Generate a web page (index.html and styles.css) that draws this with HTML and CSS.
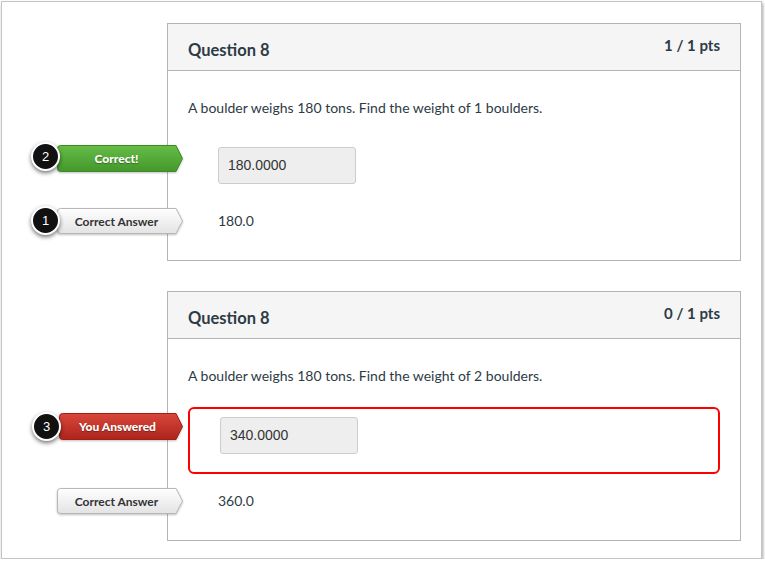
FILE: index.html
```html
<!DOCTYPE html>
<html>
<head>
<meta charset="utf-8">
<link rel="stylesheet" href="styles.css">
</head>
<body>
<div class="frame">
  <section class="card">
    <header class="card-head">
      <h2 class="title">Question 8</h2>
      <span class="pts">1 / 1 pts</span>
    </header>
    <div class="card-body">
      <p class="question">A boulder weighs 180 tons. Find the weight of 1 boulders.</p>
      <div class="answer-row">
        <div class="tag tag-green">
          <svg class="tag-bg" width="126" height="27" viewBox="0 0 126 27">
            <defs>
              <linearGradient id="gGreen" x1="0" y1="0" x2="0" y2="1">
                <stop offset="0" stop-color="#66bd46"/>
                <stop offset="1" stop-color="#44972c"/>
              </linearGradient>
            </defs>
            <path d="M3.5,0.5 H119 L125.5,13.5 L119,26.5 H3.5 Q0.5,26.5 0.5,23.5 V3.5 Q0.5,0.5 3.5,0.5 Z" fill="url(#gGreen)" stroke="#3d8a27" stroke-width="1"/>
          </svg>
          <span class="tag-text light">Correct!</span>
          <span class="step step-2">2</span>
        </div>
        <div class="answer-box plain">
          <div class="input">180.0000</div>
        </div>
      </div>
      <div class="correct-row first">
        <div class="tag tag-gray">
          <svg class="tag-bg" width="126" height="26" viewBox="0 0 126 26">
            <defs>
              <linearGradient id="gGray1" x1="0" y1="0" x2="0" y2="1">
                <stop offset="0" stop-color="#ffffff"/>
                <stop offset="1" stop-color="#e3e3e3"/>
              </linearGradient>
            </defs>
            <path d="M3.5,0.5 H119 L125.5,13 L119,25.5 H3.5 Q0.5,25.5 0.5,22.5 V3.5 Q0.5,0.5 3.5,0.5 Z" fill="url(#gGray1)" stroke="#b8b8b8" stroke-width="1"/>
          </svg>
          <span class="tag-text dark">Correct Answer</span>
          <span class="step step-1">1</span>
        </div>
        <span class="value">180.0</span>
      </div>
    </div>
  </section>

  <section class="card second">
    <header class="card-head">
      <h2 class="title">Question 8</h2>
      <span class="pts">0 / 1 pts</span>
    </header>
    <div class="card-body">
      <p class="question">A boulder weighs 180 tons. Find the weight of 2 boulders.</p>
      <div class="answer-row">
        <div class="tag tag-red">
          <svg class="tag-bg" width="124" height="27" viewBox="0 0 124 27">
            <defs>
              <linearGradient id="gRed" x1="0" y1="0" x2="0" y2="1">
                <stop offset="0" stop-color="#d9473b"/>
                <stop offset="1" stop-color="#ad241c"/>
              </linearGradient>
            </defs>
            <path d="M3.5,0.5 H117 L123.5,13.5 L117,26.5 H3.5 Q0.5,26.5 0.5,23.5 V3.5 Q0.5,0.5 3.5,0.5 Z" fill="url(#gRed)" stroke="#9e2019" stroke-width="1"/>
          </svg>
          <span class="tag-text light">You Answered</span>
          <span class="step step-3">3</span>
        </div>
        <div class="answer-box wrong">
          <div class="input">340.0000</div>
        </div>
      </div>
      <div class="correct-row second-row">
        <div class="tag tag-gray">
          <svg class="tag-bg" width="126" height="26" viewBox="0 0 126 26">
            <defs>
              <linearGradient id="gGray2" x1="0" y1="0" x2="0" y2="1">
                <stop offset="0" stop-color="#ffffff"/>
                <stop offset="1" stop-color="#e3e3e3"/>
              </linearGradient>
            </defs>
            <path d="M3.5,0.5 H119 L125.5,13 L119,25.5 H3.5 Q0.5,25.5 0.5,22.5 V3.5 Q0.5,0.5 3.5,0.5 Z" fill="url(#gGray2)" stroke="#b8b8b8" stroke-width="1"/>
          </svg>
          <span class="tag-text dark">Correct Answer</span>
        </div>
        <span class="value">360.0</span>
      </div>
    </div>
  </section>
</div>
</body>
</html>
```

FILE: styles.css
```css
* { box-sizing: border-box; }
html, body { margin: 0; padding: 0; background: #ffffff; }
body { font-family: Lato, "Open Sans", sans-serif; color: #2d3b45; }

.frame {
  margin: 1px 0 0 1px;
  width: 761px;
  height: 558px;
  border: 1px solid #c4c4c4;
  box-shadow: 1px 2px 3px rgba(0,0,0,0.35);
  padding-top: 21px;
  background: #fff;
}

.card {
  margin-left: 165px;
  width: 574px;
  border: 1px solid #b5b5b5;
  background: #fff;
}
.card.second { margin-top: 30px; }

.card-head {
  height: 47px;
  background: #f5f5f5;
  border-bottom: 1px solid #b5b5b5;
  padding: 0 20px;
  display: flex;
  justify-content: space-between;
  align-items: flex-start;
}
.title {
  margin: 15px 0 0;
  font-size: 16.5px;
  font-weight: 700;
  line-height: 22px;
  color: #2d3b45;
}
.pts {
  margin-top: 12px;
  font-size: 15px;
  font-weight: 700;
  line-height: 19px;
  color: #2d3b45;
}

.card-body { padding: 27px 20px 26px; }
.question {
  margin: 0;
  font-size: 14px;
  line-height: 20px;
  color: #2d3b45;
}

.answer-row {
  display: flex;
  align-items: flex-start;
  margin-top: 20px;
  margin-left: -131px;
}
.second .answer-row { margin-left: -129px; margin-top: 21px; }

.tag {
  position: relative;
  flex: none;
  width: 126px;
  height: 26px;
  display: flex;
  align-items: center;
  justify-content: center;
  padding-right: 7px;
}
.tag-green, .tag-red { height: 27px; margin-top: 7px; }
.tag-red { width: 124px; margin-top: 6px; }
.tag-bg {
  position: absolute;
  left: 0;
  top: 0;
  filter: drop-shadow(0 1px 1px rgba(0,0,0,0.25));
}
.tag-text {
  position: relative;
  font-size: 12px;
  font-weight: 900;
}
.tag-text.light { color: #fff; text-shadow: 0 1px 1px rgba(0,0,0,0.35); }
.tag-text.dark { color: #333; font-weight: 700; }

.step {
  position: absolute;
  width: 29px;
  height: 29px;
  border-radius: 50%;
  background: #111;
  border: 2px solid #fff;
  box-shadow: 0 2px 4px rgba(0,0,0,0.55);
  color: #fff;
  font-family: "Liberation Sans", Arial, sans-serif;
  font-size: 13px;
  line-height: 25px;
  text-align: center;
}
.step-2 { left: -26px; top: -3px; }
.step-1 { left: -26px; top: -2px; }
.step-3 { left: -27px; top: -1px; }

.answer-box {
  margin-left: 5px;
  width: 532px;
}
.answer-box.plain { padding: 9px 30px 0; }
.answer-box.wrong {
  border: 2px solid #ff0000;
  border-radius: 6px;
  padding: 8px 30px 18px;
}

.input {
  width: 138px;
  height: 37px;
  background: #eeeeee;
  border: 1px solid #cccccc;
  border-radius: 3px;
  padding-left: 9px;
  font-family: "Liberation Sans", Arial, sans-serif;
  font-size: 14px;
  line-height: 35px;
  color: #333;
}

.correct-row {
  display: flex;
  align-items: center;
  margin-left: -131px;
}
.correct-row.first { margin-top: 24px; }
.correct-row.second-row { margin-top: 14px; }
.value {
  margin-left: 35px;
  font-size: 14px;
  line-height: 20px;
  color: #2d3b45;
}
```
